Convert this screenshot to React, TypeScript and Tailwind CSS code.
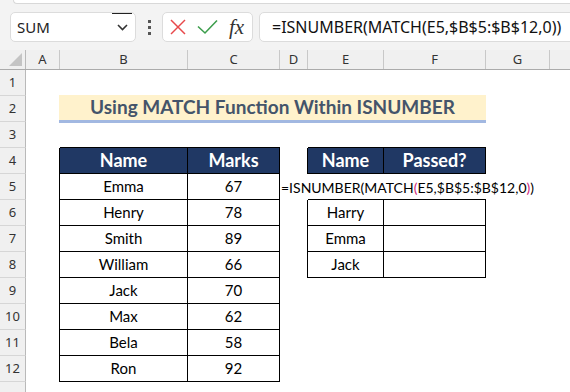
import React from 'react';

type Cell = { w: string; cls?: string; content?: React.ReactNode };

const t1: [string, number][] = [
  ['Emma', 67],
  ['Henry', 78],
  ['Smith', 89],
  ['William', 66],
  ['Jack', 70],
  ['Max', 62],
  ['Bela', 58],
  ['Ron', 92],
];
const t2: Record<number, string> = { 6: 'Harry', 7: 'Emma', 8: 'Jack' };

const W = {
  A: 'w-[34px]',
  B: 'w-[128px]',
  C: 'w-[92px]',
  D: 'w-[28px]',
  E: 'w-[76px]',
  F: 'w-[102px]',
  G: 'w-[64px]',
};

const dataCls = 'border-r border-b border-black flex items-center justify-center text-[15px] text-black';
const headCls = 'border-r border-b border-black bg-[#203864] flex items-center justify-center text-[18px] font-bold text-white';

function cellsFor(n: number): Cell[] {
  const cells: Cell[] = [];
  const inT1 = n >= 4 && n <= 12;
  const inT2 = n === 4 || (n >= 6 && n <= 8);
  cells.push({ w: W.A, cls: inT1 ? 'border-r border-black' : '' });
  if (n === 3) {
    cells.push({ w: W.B, cls: 'border-b border-black' });
    cells.push({ w: W.C, cls: 'border-b border-black' });
  } else if (n === 4) {
    cells.push({ w: W.B, cls: headCls, content: 'Name' });
    cells.push({ w: W.C, cls: headCls, content: 'Marks' });
  } else if (inT1) {
    const r = t1[n - 5];
    cells.push({ w: W.B, cls: dataCls, content: r[0] });
    cells.push({ w: W.C, cls: dataCls, content: r[1] });
  } else {
    cells.push({ w: W.B });
    cells.push({ w: W.C });
  }
  if (n === 5) {
    cells.push({
      w: W.D,
      cls: 'relative z-10 flex items-center whitespace-nowrap overflow-visible pl-[1px] text-[14px] text-black',
      content: (
        <span>
          =ISNUMBER(MATCH<span className="text-[#d0267a]">(</span>E5,$B$5:$B$12,0
          <span className="text-[#d0267a]">)</span>)
        </span>
      ),
    });
  } else {
    cells.push({ w: W.D, cls: inT2 ? 'border-r border-black' : '' });
  }
  if (n === 3 || n === 5) {
    cells.push({ w: W.E, cls: 'border-b border-black' });
    cells.push({ w: W.F, cls: 'border-b border-black' });
  } else if (n === 4) {
    cells.push({ w: W.E, cls: headCls, content: 'Name' });
    cells.push({ w: W.F, cls: headCls, content: 'Passed?' });
  } else if (inT2) {
    cells.push({ w: W.E, cls: dataCls, content: t2[n] });
    cells.push({ w: W.F, cls: dataCls, content: '' });
  } else {
    cells.push({ w: W.E });
    cells.push({ w: W.F });
  }
  cells.push({ w: W.G });
  return cells;
}

function RowHead({ n }: { n: number }) {
  return (
    <div className="w-[26px] shrink-0 h-full border-r border-r-[#b9b9b9] border-b border-b-[#d6d6d6] bg-[#f0f0f0] flex items-center justify-center text-[13px] text-[#333] font-['Noto_Sans',sans-serif]">
      {n <= 12 ? n : ''}
    </div>
  );
}

function SheetRow({ n }: { n: number }) {
  if (n === 2) {
    return (
      <div className="flex h-[26px] shrink-0">
        <RowHead n={n} />
        <div className="w-[33px] shrink-0" />
        <div className="w-[427px] shrink-0 -mt-[1px] h-[28px] bg-[#fff2cc] border-b-[3px] border-[#a2b8e1] flex items-center justify-center text-[19px] font-bold text-[#44546a]">
          Using MATCH Function Within ISNUMBER
        </div>
        <div className="flex-1" />
      </div>
    );
  }
  const cells = cellsFor(n);
  return (
    <div className="flex h-[26px] shrink-0">
      <RowHead n={n} />
      {cells.map((c, i) => (
        <div key={i} className={`${c.w} shrink-0 h-full ${c.cls ?? ''}`}>
          {c.content}
        </div>
      ))}
      <div className="flex-1" />
    </div>
  );
}

function ColHead({ w, label }: { w: string; label: string }) {
  return (
    <div className={`${w} shrink-0 h-full border-r border-[#c8c8c8] flex items-center justify-center text-[13px] text-[#333]`}>
      {label}
    </div>
  );
}

export default function App() {
  return (
    <div className="w-[570px] h-[392px] overflow-hidden bg-white flex flex-col font-['Lato',sans-serif]">
      <div className="h-[50px] shrink-0 bg-[#f3f3f3] flex flex-col">
        <div className="ml-[13px] h-[4px] bg-white border-b border-l border-[#d8d8d8] rounded-bl-[5px]" />
        <div className="flex items-start pt-[8px] font-['Noto_Sans',sans-serif]">
          <div className="ml-[10px] w-[126px] h-[30px] shrink-0 bg-white border border-[#dcdcdc] rounded-[5px] flex items-stretch">
            <div className="flex-1 flex items-center pl-[6px] text-[15px] text-[#222]">SUM</div>
            <div className="w-[20px] mr-[3px] border-t border-[#222] flex items-center justify-center">
              <svg width="11" height="7" viewBox="0 0 11 7">
                <polyline points="1,1 5.5,5.5 10,1" fill="none" stroke="#333" strokeWidth="1.6" />
              </svg>
            </div>
          </div>
          <div className="w-[26px] h-[30px] shrink-0 flex flex-col items-center justify-center gap-[3px]">
            <div className="w-[3px] h-[3px] bg-[#555]" />
            <div className="w-[3px] h-[3px] bg-[#555]" />
            <div className="w-[3px] h-[3px] bg-[#555]" />
          </div>
          <div className="w-[91px] h-[30px] shrink-0 bg-white border border-[#dcdcdc] rounded-[5px] flex items-center">
            <svg width="16" height="16" viewBox="0 0 16 16" className="ml-[7px]">
              <line x1="1" y1="1" x2="15" y2="15" stroke="#e8484b" strokeWidth="1.5" />
              <line x1="15" y1="1" x2="1" y2="15" stroke="#e8484b" strokeWidth="1.5" />
            </svg>
            <svg width="21" height="16" viewBox="0 0 21 16" className="ml-[11px]">
              <polyline points="1,7.5 8,14 20,1.5" fill="none" stroke="#3d9e4d" strokeWidth="1.6" />
            </svg>
            <span className="ml-[11px] italic text-[21px] leading-none text-[#333] font-['Liberation_Serif',serif]">fx</span>
          </div>
          <div className="ml-[6px] w-[330px] h-[30px] shrink-0 bg-white border border-[#dcdcdc] rounded-[5px] flex items-center pl-[12px] text-[16px] text-[#111] whitespace-nowrap">
            =ISNUMBER(MATCH(E5,$B$5:$B$12,0))
          </div>
        </div>
      </div>
      <div className="h-[20px] shrink-0 flex bg-[#f0f0f0] border-b border-[#ababab] font-['Noto_Sans',sans-serif]">
        <div className="w-[26px] shrink-0 h-full border-r border-[#b9b9b9] flex items-end justify-end pr-[3px] pb-[3px]">
          <svg width="13" height="13" viewBox="0 0 13 13">
            <polygon points="13,0 13,13 0,13" fill="#c4c4c4" />
          </svg>
        </div>
        <ColHead w={W.A} label="A" />
        <ColHead w={W.B} label="B" />
        <ColHead w={W.C} label="C" />
        <ColHead w={W.D} label="D" />
        <ColHead w={W.E} label="E" />
        <ColHead w={W.F} label="F" />
        <ColHead w={W.G} label="G" />
        <div className="flex-1" />
      </div>
      <div className="flex flex-col">
        {[1, 2, 3, 4, 5, 6, 7, 8, 9, 10, 11, 12, 13].map((n) => (
          <SheetRow key={n} n={n} />
        ))}
      </div>
    </div>
  );
}
